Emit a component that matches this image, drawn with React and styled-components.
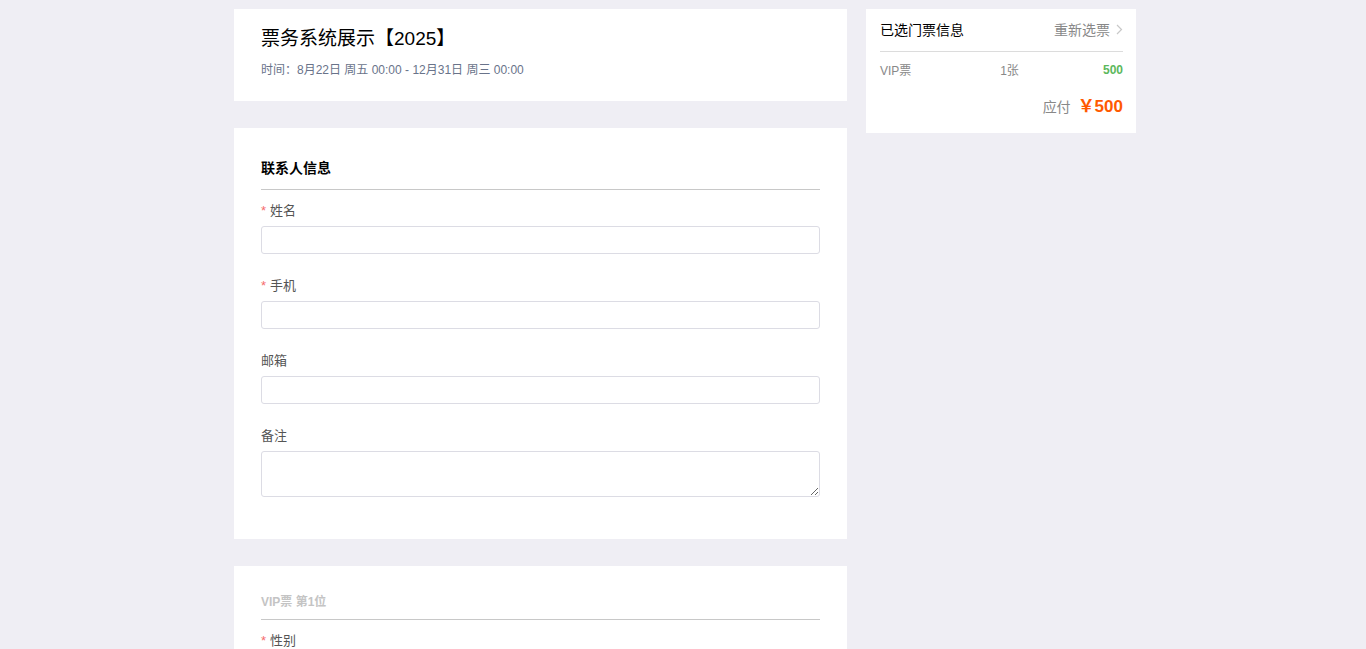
import React from "react";
import styled, { createGlobalStyle } from "styled-components";

const GlobalStyle = createGlobalStyle`
  html, body {
    margin: 0;
    padding: 0;
    background: #efeef4;
    font-family: "Liberation Sans", "Noto Sans CJK SC", sans-serif;
  }
  * {
    box-sizing: border-box;
  }
`;

const Page = styled.div`
  display: flex;
  align-items: flex-start;
  gap: 19px;
  width: 902px;
  margin-left: calc(50% - 449px);
  padding: 9px 0 40px;
`;

const Main = styled.div`
  width: 613px;
  display: flex;
  flex-direction: column;
  gap: 27px;
`;

const Card = styled.div`
  background: #fff;
  padding: ${(p) => p.$pad || "0 27px"};
`;

const EventTitle = styled.h1`
  margin: 0;
  font-size: 19px;
  font-weight: normal;
  line-height: 26px;
  color: #000;
`;

const EventTime = styled.div`
  margin-top: 10px;
  font-size: 12px;
  line-height: 16px;
  color: #69738a;
`;

const SectionTitle = styled.div`
  font-size: ${(p) => (p.$muted ? "12px" : "14px")};
  font-weight: bold;
  line-height: 20px;
  color: ${(p) => (p.$muted ? "#c4c4c4" : "#000")};
  padding-bottom: ${(p) => (p.$muted ? "7px" : "11px")};
  border-bottom: 1px solid #c8c8c8;
  margin-bottom: 12px;
`;

const Field = styled.div`
  margin-bottom: 23px;
`;

const Label = styled.div`
  font-size: 13px;
  line-height: 18px;
  color: #555;
  margin-bottom: 6px;
`;

const Star = styled.span`
  color: #f56c6c;
  margin-right: 4px;
`;

const Input = styled.input`
  display: block;
  width: 100%;
  height: 28px;
  border: 1px solid #dcdce4;
  border-radius: 3px;
  background: #fff;
  outline: none;
  padding: 0 8px;
`;

const TextArea = styled.textarea`
  display: block;
  width: 100%;
  height: 46px;
  border: 1px solid #dcdce4;
  border-radius: 3px;
  background: #fff;
  outline: none;
  padding: 4px 8px;
  font-family: inherit;
`;

const Side = styled.div`
  width: 270px;
  background: #fff;
  padding: 0 13px 16px 14px;
`;

const SideHead = styled.div`
  display: flex;
  justify-content: space-between;
  align-items: center;
  height: 43px;
  padding-bottom: 2px;
  border-bottom: 1px solid #dcdcdc;
  font-size: 14px;
  color: #000;
`;

const Reselect = styled.span`
  display: flex;
  align-items: center;
  gap: 6px;
  color: #888;
`;

const TicketRow = styled.div`
  display: grid;
  grid-template-columns: 1fr 1fr 1fr;
  align-items: center;
  height: 35px;
  font-size: 12px;
  color: #888;
`;

const Count = styled.span`
  text-align: center;
  padding-left: 16px;
`;

const Price = styled.span`
  text-align: right;
  color: #5cb85c;
  font-weight: bold;
`;

const Total = styled.div`
  display: flex;
  justify-content: flex-end;
  align-items: baseline;
  gap: 7px;
  margin-top: 5px;
  font-size: 14px;
  color: #888;
`;

const Amount = styled.span`
  font-size: 17px;
  font-weight: bold;
  color: #ff5a00;
`;

const Chevron = () => (
  <svg width="7" height="11" viewBox="0 0 7 11" fill="none">
    <path d="M1 1l4.5 4.5L1 10" stroke="#c8c8c8" strokeWidth="1.2" />
  </svg>
);

const FormField = ({ label, required, area }) => (
  <Field>
    <Label>
      {required && <Star>*</Star>}
      {label}
    </Label>
    {area ? <TextArea /> : <Input />}
  </Field>
);

export default function App() {
  return (
    <>
      <GlobalStyle />
      <Page>
        <Main>
          <Card $pad="17px 27px 23px">
            <EventTitle>票务系统展示【2025】</EventTitle>
            <EventTime>时间：8月22日 周五 00:00 - 12月31日 周三 00:00</EventTime>
          </Card>

          <Card $pad="30px 27px 19px">
            <SectionTitle>联系人信息</SectionTitle>
            <FormField label="姓名" required />
            <FormField label="手机" required />
            <FormField label="邮箱" />
            <FormField label="备注" area />
          </Card>

          <Card $pad="26px 27px 1px">
            <SectionTitle $muted>VIP票 第1位</SectionTitle>
            <FormField label="性别" required />
            <FormField label="年龄" required />
            <FormField label="身份证号" required />
            <FormField label="公司" />
            <FormField label="职位" />
          </Card>
        </Main>

        <Side>
          <SideHead>
            <span>已选门票信息</span>
            <Reselect>
              重新选票
              <Chevron />
            </Reselect>
          </SideHead>
          <TicketRow>
            <span>VIP票</span>
            <Count>1张</Count>
            <Price>500</Price>
          </TicketRow>
          <Total>
            应付
            <Amount>￥500</Amount>
          </Total>
        </Side>
      </Page>
    </>
  );
}
